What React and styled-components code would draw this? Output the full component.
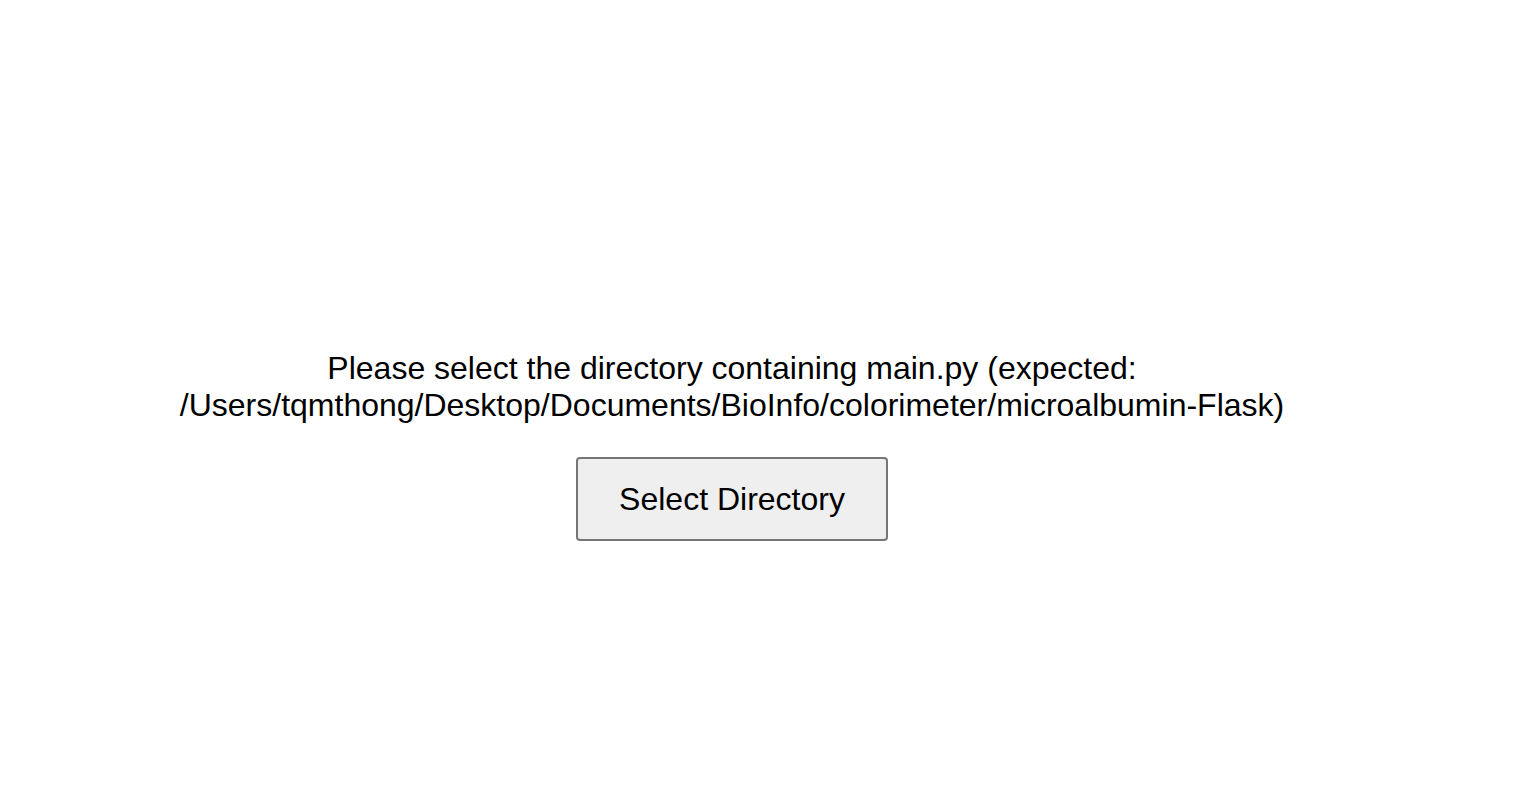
import React from "react";
import styled, { createGlobalStyle } from "styled-components";

const Global = createGlobalStyle`
  html, body { margin: 0; padding: 0; background: #ffffff; }
  body { font-family: "Liberation Sans", Arial, sans-serif; color: #000; }
`;

const Page = styled.main`
  width: 1464px;
  min-height: 804px;
  box-sizing: border-box;
  padding-top: 350px;
  display: flex;
  flex-direction: column;
  align-items: center;
`;

const Message = styled.p`
  margin: 0;
  font-size: 32px;
  line-height: 37px;
  text-align: center;
  max-width: 1200px;
`;

const Button = styled.button`
  margin-top: 33px;
  box-sizing: border-box;
  width: 312px;
  height: 84px;
  font-family: "Liberation Sans", Arial, sans-serif;
  font-size: 32px;
  color: #000;
  background: #efefef;
  border: 2px solid #767676;
  border-radius: 4px;
  cursor: pointer;
`;

export default function App() {
  return (
    <>
      <Global />
      <Page>
        <Message>
          Please select the directory containing main.py (expected:
          <br />
          /Users/tqmthong/Desktop/Documents/BioInfo/colorimeter/microalbumin-Flask)
        </Message>
        <Button>Select Directory</Button>
      </Page>
    </>
  );
}
